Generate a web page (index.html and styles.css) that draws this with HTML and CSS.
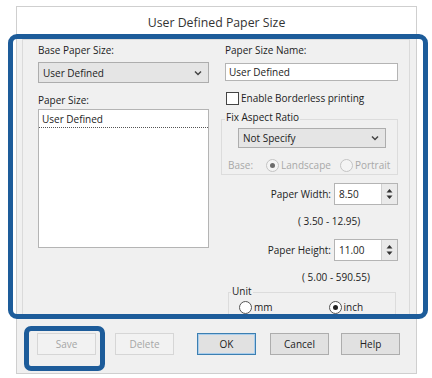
FILE: index.html
```html
<!DOCTYPE html>
<html lang="en">
<head>
    <meta charset="UTF-8">
    <title>User Defined Paper Size</title>
    <link rel="stylesheet" href="styles.css">
</head>
<body>
    <div class="dialog">
        <div class="title">User Defined Paper Size</div>

        <div class="panel">
            <!-- left side -->
            <div class="col col-left">
                <div class="label">Base Paper Size:</div>
                <div class="select select-base">
                    <span>User Defined</span>
                    <svg class="chev" width="8" height="6" viewBox="0 0 8 6"><polyline points="1,1.5 4,4.5 7,1.5" fill="none" stroke="#444" stroke-width="1.5"/></svg>
                </div>
                <div class="label label-size">Paper Size:</div>
                <div class="list">
                    <div class="list-item">User Defined</div>
                </div>
            </div>

            <!-- right side -->
            <div class="col col-right">
                <div class="label">Paper Size Name:</div>
                <div class="textbox">User Defined</div>
                <div class="check-row">
                    <span class="checkbox"></span>
                    <span>Enable Borderless printing</span>
                </div>

                <fieldset class="group group-ratio">
                    <legend>Fix Aspect Ratio</legend>
                    <div class="select select-ratio">
                        <span>Not Specify</span>
                        <svg class="chev" width="8" height="6" viewBox="0 0 8 6"><polyline points="1,1.5 4,4.5 7,1.5" fill="none" stroke="#444" stroke-width="1.5"/></svg>
                    </div>
                    <div class="radio-row disabled">
                        <span class="base-label">Base:</span>
                        <span class="radio checked"></span>
                        <span class="radio-text">Landscape</span>
                        <span class="radio radio-gap"></span>
                        <span class="radio-text">Portrait</span>
                    </div>
                </fieldset>

                <div class="field-row row-width">
                    <span class="field-label">Paper Width:</span>
                    <div class="spin">
                        <span class="spin-value">8.50</span>
                        <span class="spin-btn">
                            <svg width="7" height="12" viewBox="0 0 7 12"><polygon points="3.5,1 6.5,4.5 0.5,4.5" fill="#333"/><polygon points="0.5,7.5 6.5,7.5 3.5,11" fill="#333"/></svg>
                        </span>
                    </div>
                </div>
                <div class="range range-width">( 3.50 - 12.95)</div>

                <div class="field-row row-height">
                    <span class="field-label">Paper Height:</span>
                    <div class="spin">
                        <span class="spin-value">11.00</span>
                        <span class="spin-btn">
                            <svg width="7" height="12" viewBox="0 0 7 12"><polygon points="3.5,1 6.5,4.5 0.5,4.5" fill="#333"/><polygon points="0.5,7.5 6.5,7.5 3.5,11" fill="#333"/></svg>
                        </span>
                    </div>
                </div>
                <div class="range range-height">( 5.00 - 590.55)</div>

                <fieldset class="group group-unit">
                    <legend>Unit</legend>
                    <div class="radio-row unit-row">
                        <span class="radio"></span>
                        <span class="radio-text">mm</span>
                        <span class="radio checked radio-inch"></span>
                        <span class="radio-text">inch</span>
                    </div>
                </fieldset>
            </div>
        </div>

        <div class="buttons">
            <button class="btn btn-save" disabled>Save</button>
            <button class="btn btn-delete" disabled>Delete</button>
            <button class="btn btn-ok">OK</button>
            <button class="btn btn-cancel">Cancel</button>
            <button class="btn btn-help">Help</button>
        </div>
    </div>

    <!-- callout frames drawn over the dialog -->
    <div class="mark mark-main"></div>
    <div class="mark mark-save"></div>
</body>
</html>
```

FILE: styles.css
```css
body {
    margin: 0;
    background: #fff;
    font-family: "Open Sans", "Noto Sans", sans-serif;
    font-size: 10px;
    color: #222;
    position: relative;
    width: 432px;
    height: 378px;
    overflow: hidden;
}
.dialog {
    box-sizing: border-box;
    margin: 6px 0 0 16px;
    width: 401px;
    height: 368px;
    border: 1px solid #cfcfcf;
    background: #f0f0f0;
}
.title {
    height: 31px;
    line-height: 31px;
    background: #fff;
    text-align: center;
    font-size: 12.3px;
    color: #333;
}
.panel {
    box-sizing: border-box;
    display: flex;
    gap: 16px;
    margin: 1px 6px 0 5px;
    height: 277px;
    padding: 3px 11px 0 15px;
    border: 1px solid #dadada;
    overflow: hidden;
}
.col-left {
    width: 171px;
}
.col-right {
    width: 173px;
}
.label {
    line-height: 14px;
}
.label-size {
    margin-top: 10px;
}
.select {
    box-sizing: border-box;
    display: flex;
    align-items: center;
    justify-content: space-between;
    padding: 0 6px 0 4px;
    background: #e5e5e5;
    border: 1px solid #adadad;
}
.select-base {
    margin-top: 5px;
    height: 21px;
}
.list {
    box-sizing: border-box;
    margin-top: 2px;
    height: 139px;
    background: #fff;
    border: 1px solid #b4b4b4;
    padding: 1px 0 0;
}
.list-item {
    line-height: 16px;
    padding-left: 3px;
    border-bottom: 1px dotted #555;
}
.textbox {
    box-sizing: border-box;
    margin-top: 6px;
    height: 18px;
    line-height: 16px;
    padding-left: 3px;
    background: #fff;
    border: 1px solid #b4b4b4;
}
.check-row {
    display: flex;
    align-items: center;
    gap: 2px;
    margin-top: 10px;
    height: 14px;
}
.checkbox {
    box-sizing: border-box;
    width: 13px;
    height: 13px;
    margin-left: 1px;
    background: #fff;
    border: 1px solid #444;
}
.group {
    margin: 0;
    padding: 0;
    border: 1px solid #dcdcdc;
}
.group legend {
    line-height: 14px;
    padding: 0 1px 4px;
}
.group-ratio {
    margin: 5px 0 0 -4px;
    width: 177px;
    box-sizing: border-box;
    padding-bottom: 2px;
}
.group-ratio legend {
    margin-left: 3px;
}
.select-ratio {
    margin-left: 16px;
    width: 148px;
    height: 20px;
}
.radio-row {
    display: flex;
    align-items: center;
    height: 14px;
}
.radio-row.disabled {
    margin-top: 10px;
    padding-left: 6px;
    color: #a8a8a8;
}
.base-label {
    width: 38px;
}
.radio {
    box-sizing: border-box;
    width: 13px;
    height: 13px;
    border-radius: 50%;
    border: 1px solid #555;
    background: #fff;
    display: flex;
    align-items: center;
    justify-content: center;
}
.disabled .radio {
    border-color: #c4c4c4;
    background: #f4f4f4;
}
.radio.checked::after {
    content: "";
    width: 5px;
    height: 5px;
    border-radius: 50%;
    background: #222;
}
.disabled .radio.checked::after {
    background: #6b6b6b;
}
.radio-text {
    margin-left: 2px;
}
.radio-gap {
    margin-left: 9px;
}
.field-row {
    display: flex;
    align-items: center;
    justify-content: flex-end;
    height: 22px;
}
.row-width {
    margin-top: 8px;
}
.row-height {
    margin-top: 11px;
}
.field-label {
    margin-right: 3px;
}
.spin {
    box-sizing: border-box;
    display: flex;
    width: 64px;
    height: 22px;
    background: #fff;
    border: 1px solid #b4b4b4;
}
.spin-value {
    flex: 1;
    line-height: 20px;
    padding-left: 4px;
}
.spin-btn {
    display: flex;
    align-items: center;
    justify-content: center;
    width: 15px;
    border-left: 1px solid #d0d0d0;
    background: #eaeaea;
}
.range {
    line-height: 14px;
}
.range-width {
    margin-top: 9px;
    padding-left: 73px;
}
.range-height {
    margin-top: 9px;
    padding-left: 77px;
}
.group-unit {
    margin: 0 0 0 3px;
    width: 168px;
    box-sizing: border-box;
}
.group-unit legend {
    margin-left: 2px;
    padding-bottom: 2px;
}
.unit-row {
    padding-left: 10px;
}
.radio-inch {
    margin-left: 56px;
}
.buttons {
    display: flex;
    margin-top: 17px;
    padding-left: 20px;
}
.btn {
    box-sizing: border-box;
    width: 59px;
    height: 22px;
    padding: 0;
    font-family: inherit;
    font-size: 10px;
    color: #222;
    background: #e1e1e1;
    border: 1px solid #adadad;
    border-radius: 0;
}
.btn:disabled {
    color: #a6a6a6;
    background: #f2f2f2;
    border-color: #d6d6d6;
}
.btn-delete {
    margin-left: 19px;
}
.btn-ok {
    margin-left: 23px;
    border-color: #3c7fb1;
    box-shadow: inset 0 0 0 1px #a9cdec;
}
.btn-cancel {
    margin-left: 14px;
}
.btn-help {
    margin-left: 12px;
}
.mark {
    position: absolute;
    box-sizing: border-box;
    border: 5px solid #1d5c9a;
}
.mark-main {
    left: 8px;
    top: 34px;
    width: 420px;
    height: 285px;
    border-radius: 9px;
}
.mark-save {
    left: 24px;
    top: 326px;
    width: 81px;
    height: 45px;
    border-radius: 7px;
}
```
